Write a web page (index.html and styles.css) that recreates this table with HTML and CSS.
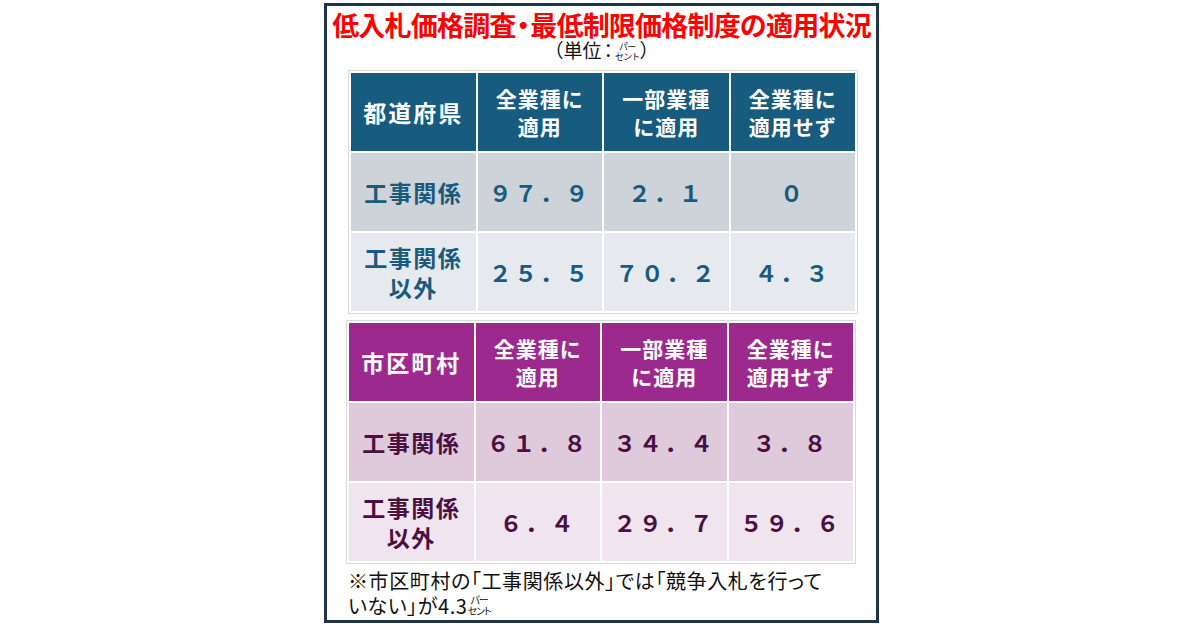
FILE: index.html
```html
<!DOCTYPE html>
<html lang="ja">
<head>
<meta charset="utf-8">
<title>低入札価格調査・最低制限価格制度の適用状況</title>
<link rel="stylesheet" href="styles.css">
</head>
<body>
<div class="frame">
  <h1 class="title">低入札価格調査<span class="dot">・</span>最低制限価格制度の適用状況</h1>
  <div class="unit">（単位<span class="colon">：</span><span class="stack"><span>パー</span><span>セント</span></span>）</div>

  <table class="tbl pref">
    <tr class="head">
      <th class="big">都道府県</th>
      <th>全業種に<br>適用</th>
      <th>一部業種<br>に適用</th>
      <th>全業種に<br>適用せず</th>
    </tr>
    <tr class="r1">
      <th class="lbl">工事関係</th>
      <td>９７．９</td>
      <td>２．１</td>
      <td>０</td>
    </tr>
    <tr class="r2">
      <th class="lbl">工事関係<br>以外</th>
      <td>２５．５</td>
      <td>７０．２</td>
      <td>４．３</td>
    </tr>
  </table>

  <table class="tbl muni">
    <tr class="head">
      <th class="big">市区町村</th>
      <th>全業種に<br>適用</th>
      <th>一部業種<br>に適用</th>
      <th>全業種に<br>適用せず</th>
    </tr>
    <tr class="r1">
      <th class="lbl">工事関係</th>
      <td>６１．８</td>
      <td>３４．４</td>
      <td>３．８</td>
    </tr>
    <tr class="r2">
      <th class="lbl">工事関係<br>以外</th>
      <td>６．４</td>
      <td>２９．７</td>
      <td>５９．６</td>
    </tr>
  </table>

  <p class="note">※市区町村の「工事関係以外」では「競争入札を行って<br>いない」が4.3<span class="stack"><span>パー</span><span>セント</span></span></p>
</div>
</body>
</html>
```

FILE: styles.css
```css
* { box-sizing: border-box; }

html, body {
  margin: 0;
  padding: 0;
  background: #ffffff;
}

body {
  font-family: "Noto Sans CJK JP", "Noto Sans", sans-serif;
  color: #000;
}

.frame {
  margin: 3px 0 0 324px;
  width: 555px;
  height: 620px;
  border: 3px solid #1e3448;
  overflow: hidden;
}

.title {
  margin: 4px 0 0;
  font-size: 27px;
  line-height: 30px;
  font-weight: 700;
  color: #ff0000;
  text-align: center;
  letter-spacing: -0.8px;
  white-space: nowrap;
}

.title .dot {
  font-feature-settings: "palt";
  margin: 0 1px;
}

.unit {
  font-size: 19px;
  line-height: 20px;
  height: 20px;
  text-align: center;
  color: #111;
  white-space: nowrap;
}

.unit .colon {
  font-feature-settings: "palt";
  margin: 0 2px;
}

.stack {
  display: inline-block;
  font-size: 9px;
  line-height: 10px;
  vertical-align: -2px;
  text-align: center;
  letter-spacing: -0.8px;
}

.stack span {
  display: block;
}

.tbl {
  border-collapse: separate;
  border-spacing: 2px;
  border: 1px solid #d9d9d9;
  table-layout: fixed;
  width: 510px;
}

.pref {
  margin: 10px 0 0 21px;
}

.muni {
  margin: 6px 0 0 19px;
}

.tbl th,
.tbl td {
  height: 78px;
  padding: 0;
  text-align: center;
  vertical-align: middle;
}

.head th {
  font-size: 21px;
  line-height: 28px;
  font-weight: 700;
  color: #ffffff;
  letter-spacing: 1px;
}

.head th.big {
  font-size: 23px;
  letter-spacing: 2px;
}

.lbl {
  font-size: 23px;
  line-height: 30px;
  font-weight: 700;
  letter-spacing: 1.5px;
}

.tbl td {
  font-size: 23px;
  font-weight: 700;
  letter-spacing: 2.5px;
}

.pref .head th { background: #175b7f; }
.pref .r1 th, .pref .r1 td { background: #cdd3d9; }
.pref .r2 th, .pref .r2 td { background: #e6eaee; }
.pref .r1, .pref .r2 { color: #1a5a7b; }

.muni .head th { background: #9c2a8e; }
.muni .r1 th, .muni .r1 td { background: #dfcadc; }
.muni .r2 th, .muni .r2 td { background: #f0e4ef; }
.muni .r1, .muni .r2 { color: #4a1042; }

.note {
  margin: 4px 0 0 21px;
  font-size: 20px;
  line-height: 25px;
  color: #111;
  white-space: nowrap;
  font-feature-settings: "palt";
  letter-spacing: 0.6px;
}

.note .stack {
  font-size: 10px;
  line-height: 11px;
  vertical-align: -1px;
  letter-spacing: -1px;
}
```
